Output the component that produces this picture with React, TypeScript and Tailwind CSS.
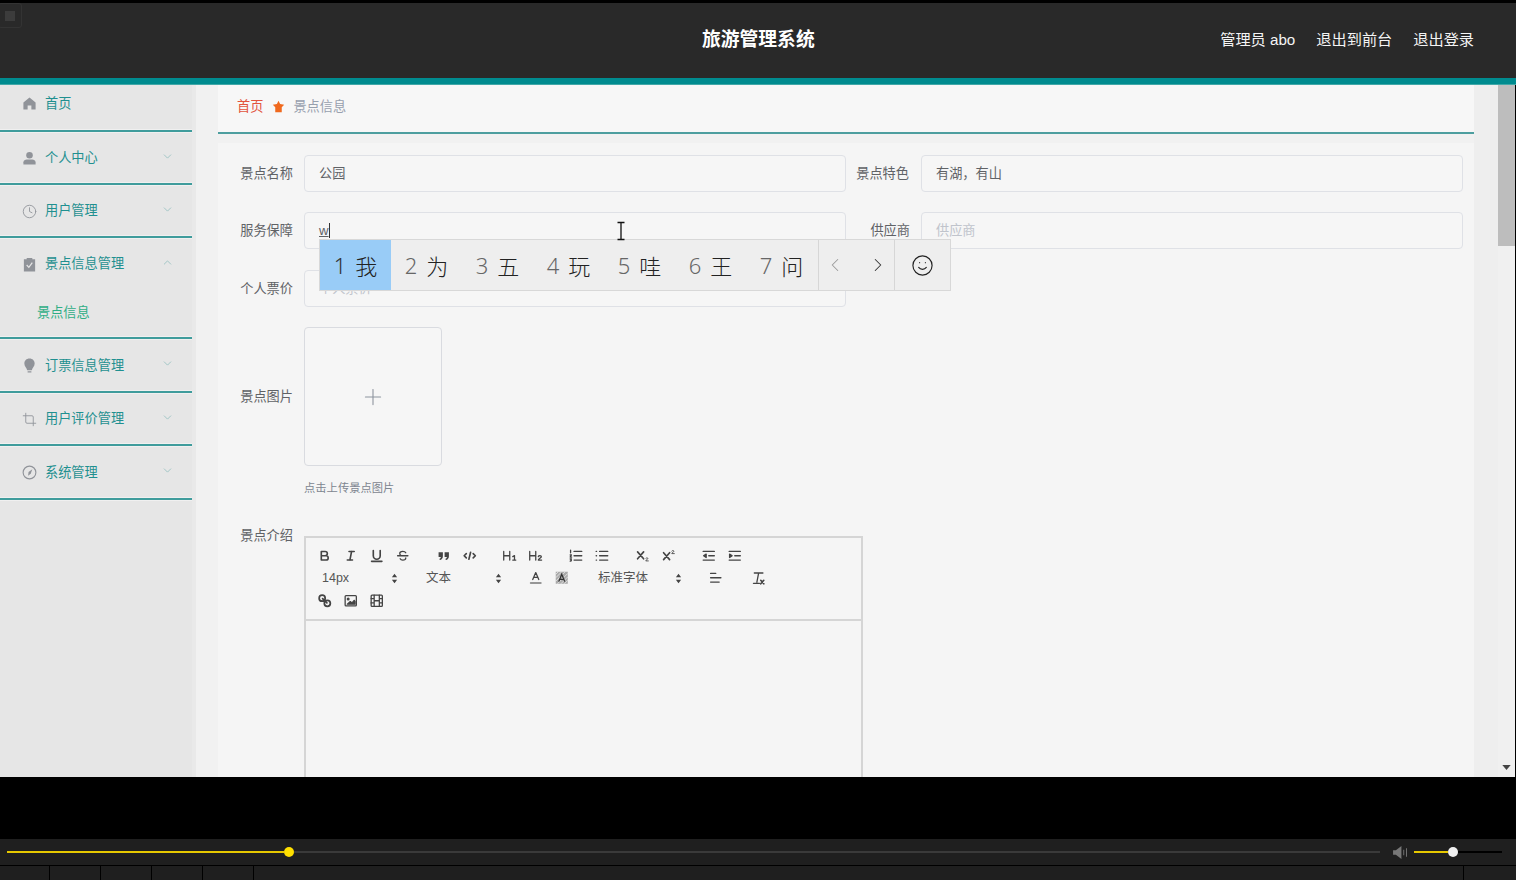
import React from "react";
import { ChevronDown, ChevronUp, ChevronLeft, ChevronRight, Clock, Crop, Plus, Smile } from "lucide-react";

const FONT = "font-['Liberation_Sans','Noto_Sans_CJK_SC',sans-serif]";

type P = { children: React.ReactNode };
const Q = ({ children }: P) => (
  <svg viewBox="0 0 18 18" className="w-[15.5px] h-[15.5px]" fill="none" stroke="#444" strokeWidth="1.9" strokeLinecap="round" strokeLinejoin="round">
    {children}
  </svg>
);
const Thin = ({ children }: P) => (
  <svg viewBox="0 0 18 18" className="w-[15.5px] h-[15.5px]" fill="none" stroke="#444" strokeWidth="1.5" strokeLinecap="round" strokeLinejoin="round">
    {children}
  </svg>
);

const icons: Record<string, React.ReactNode> = {
  bold: <Q><path d="M5 4h4.5a2.5 2.5 0 0 1 0 5H5zM5 9h5.5a2.5 2.5 0 0 1 0 5H5z" /></Q>,
  italic: <Q><path d="M7 4h6M5 14h6M10 4l-2 10" /></Q>,
  underline: <Q><path d="M5 3v6a4 4 0 0 0 8 0V3M3 15.5h12" /></Q>,
  strike: <Thin><path d="M3 9h12M12.5 5.5C12 4.5 10.5 4 9 4 7 4 5.5 5 5.5 6.5c0 .8.4 1.5 1.2 2M6 12.5C6.5 13.5 7.7 14 9 14c2 0 3.5-1 3.5-2.5" /></Thin>,
  quote: <Q><path fill="#444" stroke="none" d="M3 5h5v4.5C8 12 6.5 13.5 4.5 14l-.6-1.3c1-.4 1.6-1.1 1.7-2.2H3zM10 5h5v4.5c0 2.5-1.500 4-3.500 4.500l-.6-1.300c1-.4 1.600-1.100 1.700-2.200H10z" /></Q>,
  code: <Q><path d="M5 6.500 2.500 9 5 11.500M13 6.500 15.500 9 13 11.500M10 5l-2 8" /></Q>,
  h1: <Thin><path d="M2 4v10M9 4v10M2 9h7M12.500 10l2-1.200V14M12.500 14h3.500" /></Thin>,
  h2: <Thin><path d="M2 4v10M9 4v10M2 9h7M12 10c.3-1.500 3.500-1.500 3.500.2 0 1.300-3.500 2.300-3.500 3.800h3.800" /></Thin>,
  ol: <Thin><path d="M7 4h9M7 9h9M7 14h9M3 2.500v3M2.500 8h1.500L2.500 10.500H4.200M2.500 12.700H4l-.7 1.100c.9 0 .9 1.700-.8 1.400" /></Thin>,
  ul: <Thin><path d="M6.500 4H16M6.500 9H16M6.500 14H16M2.500 4h.5M2.500 9h.5M2.500 14h.5" /></Thin>,
  sub: <Q><path d="M3 4.500l7 8M10 4.500l-7 8" /><path strokeWidth="1" d="M12.500 12c.3-.8 2.500-.8 2.500.3 0 .9-2.500 1.400-2.500 2.700H15.500" /></Q>,
  sup: <Q><path d="M3 5.500l7 8M10 5.500l-7 8" /><path strokeWidth="1" d="M12.500 3.500c.3-.8 2.500-.8 2.500.3 0 .9-2.500 1.400-2.500 2.700H15.500" /></Q>,
  outdent: <Thin><path d="M2.500 4h13M9 9h6.500M2.500 14h13" /><path fill="#444" d="M6 7 3 9l3 2z" /></Thin>,
  indent: <Thin><path d="M2.500 4h13M9 9h6.500M2.500 14h13" /><path fill="#444" d="M3 7l3 2-3 2z" /></Thin>,
  color: <Q><path strokeWidth="1.500" d="M5.500 11 9 3l3.500 8M6.800 8.500h4.400" /><path strokeWidth="1.800" stroke="#777" d="M3 15h12" /></Q>,
  bg: (
    <svg viewBox="0 0 18 18" className="w-[15.5px] h-[15.5px]" fill="none">
      <rect x="2" y="2" width="14" height="14" fill="#aaa" />
      <path stroke="#eee" strokeWidth="0.9" d="M2 5l3-3M2 9l7-7M2 13l11-11M4 16L16 4M8 16l8-8M12 16l4-4" />
      <path stroke="#333" strokeWidth="1.500" d="M5.500 13.500 9 5l3.500 8.500M6.800 10.800h4.400" />
    </svg>
  ),
  align: <Thin><path d="M3 4h6M3 9h12M3 14h10" /></Thin>,
  clean: <Q><path strokeWidth="1.500" d="M5 3.500h10M10 3.500 8 14M4 15.500h7" /><path d="M12.500 12l3.500 4M16 12l-3.500 4" /></Q>,
  link: <Thin><circle cx="6" cy="6" r="3.500" strokeWidth="2" /><circle cx="12" cy="12" r="3.500" strokeWidth="2" /><path strokeWidth="2" d="M6.500 6.500l5 5" /></Thin>,
  image: <Thin><rect x="2.500" y="3" width="13" height="12" rx="1" /><circle cx="6" cy="7" r="1" fill="#444" /><path fill="#444" d="M5 13l3.500-3 2 1.500 2.500-3 1 1.500V13z" /></Thin>,
  video: <Thin><rect x="2.500" y="2.500" width="13" height="13" rx="1" /><path d="M6 2.500v13M12 2.500v13M2.500 6.500H6M2.500 11.500H6M12 6.500h3.500M12 11.500h3.500M6 9h6" /></Thin>,
};

const Btn = ({ name }: { name: string }) => (
  <span className="w-[26px] h-[22px] flex items-center justify-center">{icons[name]}</span>
);

const Arrows = () => (
  <svg viewBox="0 0 8 12" className="w-[7px] h-[11px]" fill="#444">
    <path d="M4 0.500 7 4.500H1zM4 11.500 1 7.500h6z" />
  </svg>
);

const Picker = ({ label, className }: { label: string; className: string }) => (
  <span className={`h-[22px] pl-[10px] pr-[6px] flex items-center justify-between text-[12.500px] text-[#555] ${className}`}>
    {label}
    <Arrows />
  </span>
);

const g = "#909399";
const sideIcons: Record<string, React.ReactNode> = {
  home: <svg viewBox="0 0 16 16" className="w-[15px] h-[15px]" fill={g}><path d="M8 1.500 1.500 7v7.500h4.500v-4.500h4v4.500h4.500V7z" /></svg>,
  user: <svg viewBox="0 0 16 16" className="w-[15px] h-[15px]" fill={g}><circle cx="8" cy="4.500" r="3.500" /><path d="M1.500 14.500V12c0-2 2-3 3.500-3h6c1.500 0 3.500 1 3.500 3v2.500z" /></svg>,
  clock: <Clock size={15} color={g} strokeWidth={1.400} />,
  clip: <svg viewBox="0 0 16 16" className="w-[15px] h-[15px]"><path fill={g} d="M2 2.500h3V1h6v1.500h3v13H2z" /><path fill="none" stroke="#e6e6e6" strokeWidth="1.300" d="M5 8.500 7.300 11 11 6" /></svg>,
  bulb: <svg viewBox="0 0 16 16" className="w-[15px] h-[15px]" fill={g}><path d="M8 .5c3.300 0 5.500 2.400 5.500 5.300 0 3-2.500 4.500-3 7.200h-5c-.5-2.700-3-4.200-3-7.200C2.500 2.900 4.700.5 8 .5zM6 14h4v1.500H6z" /></svg>,
  crop: <Crop size={15} color={g} strokeWidth={1.400} />,
  compass: <svg viewBox="0 0 16 16" className="w-[15px] h-[15px]"><circle cx="8" cy="8" r="6.800" fill="none" stroke={g} strokeWidth="1.200" /><path fill={g} d="M11 4.500 9.300 9.300 6.500 11.500 7 7.500z" /></svg>,
};

const Divider = () => (
  <div className="h-[4px] flex flex-col justify-center bg-[#f0f0f0] shrink-0 -mt-[1px]">
    <div className="h-[2px] bg-[#3f9c9c]" />
  </div>
);

const SideItem = ({ icon, label, chevron, className }: { icon: string; label: string; chevron?: "up" | "down"; className: string }) => (
  <div className={`flex items-center pl-[22px] pr-[18px] ${className}`}>
    <span className="w-[15px] flex justify-center">{sideIcons[icon]}</span>
    <span className="ml-[8px] text-[13.200px] text-[#1f9090] flex-1">{label}</span>
    {chevron === "down" && <ChevronDown size={13} color="#7fb5b5" strokeWidth={1.200} className="-mt-[4px]" />}
    {chevron === "up" && <ChevronUp size={13} color="#7fb5b5" strokeWidth={1.200} className="-mt-[4px]" />}
  </div>
);

const Label = ({ children, className }: { children: React.ReactNode; className: string }) => (
  <div className={`text-[13.200px] text-[#606266] text-right shrink-0 ${className}`}>{children}</div>
);

const Input = ({ value, placeholder, className }: { value?: string; placeholder?: string; className: string }) => (
  <div className={`h-[37px] border border-[#dfe1e6] rounded-[4px] bg-[#f6f6f6] pl-[14px] flex items-center text-[13.200px] ${value ? "text-[#606266]" : "text-[#c0c4cc]"} ${className}`}>
    {value || placeholder}
  </div>
);

const cands = ["我", "为", "五", "玩", "哇", "王", "问"];

export default function App() {
  return (
    <div className={`w-[1516px] h-[880px] bg-black flex flex-col overflow-hidden relative ${FONT}`}>
      <div className="h-[3px] bg-black shrink-0" />
      <header className="h-[75px] bg-[#292929] flex items-center justify-end shrink-0 relative text-[#f4f4f4] pr-[42px] pb-[1px]">
        <div className="absolute left-[-2px] top-[0px] w-[24px] h-[25px] border border-[#333] rounded-[3px] flex items-center justify-center">
          <div className="w-[10px] h-[10px] bg-[#3c3c3c]" />
        </div>
        <div className="absolute left-[702px] top-[25px] text-[18.800px] leading-[24px] font-bold text-white">旅游管理系统</div>
        <div className="flex gap-[21px] text-[15.200px]">
          <span>管理员 abo</span>
          <span>退出到前台</span>
          <span>退出登录</span>
        </div>
      </header>
      <div className="h-[7px] bg-[#008b8f] border-b border-[#40a8a8] shrink-0" />

      <div className="h-[692px] flex shrink-0 bg-[#f1f1f1] overflow-hidden">
        <aside className="w-[218px] shrink-0 flex">
          <nav className="w-[192px] bg-[#e6e6e6] flex flex-col">
            <SideItem icon="home" label="首页" className="h-[45px] pb-[8px]" />
            <Divider />
            <SideItem icon="user" label="个人中心" chevron="down" className="h-[50px]" />
            <Divider />
            <SideItem icon="clock" label="用户管理" chevron="down" className="h-[50px]" />
            <Divider />
            <SideItem icon="clip" label="景点信息管理" chevron="up" className="h-[50px]" />
            <div className="h-[48px] pl-[37px] flex items-center text-[13.200px] text-[#2fae85] pb-[1px]">景点信息</div>
            <Divider />
            <SideItem icon="bulb" label="订票信息管理" chevron="down" className="h-[51px]" />
            <Divider />
            <SideItem icon="crop" label="用户评价管理" chevron="down" className="h-[50px]" />
            <Divider />
            <SideItem icon="compass" label="系统管理" chevron="down" className="h-[51px]" />
            <Divider />
          </nav>
          <div className="w-[4px] bg-[#e9e9e9]" />
        </aside>

        <main className="w-[1256px] shrink-0 flex flex-col relative">
          <div className="h-[47px] bg-[#f7f7f7] flex items-center pl-[19px] pb-[4px] text-[13.200px] shrink-0">
            <span className="text-[#e2543d]">首页</span>
            <svg viewBox="0 0 16 16" className="w-[13px] h-[13px] ml-[9px] mr-[8px]" fill="#f0691e"><path d="M8 1l2 4 5 .7-3 3.300V15H4V9L1 5.700 6 5z" /></svg>
            <span className="text-[#97a0ae]">景点信息</span>
          </div>
          <div className="h-[2px] bg-[#4d9e9f] shrink-0" />
          <div className="h-[9px] shrink-0" />
          <div className="flex-1 bg-[#f5f5f5] pt-[12px] flex flex-col">
            <div className="flex items-center">
              <Label className="w-[75px]">景点名称</Label>
              <Input value="公园" className="w-[542px] ml-[11px]" />
              <Label className="w-[63px]">景点特色</Label>
              <Input value="有湖，有山" className="w-[542px] ml-[12px]" />
            </div>
            <div className="flex items-center mt-[20px]">
              <Label className="w-[75px]">服务保障</Label>
              <div className="w-[542px] ml-[11px] h-[37px] border border-[#dfe1e6] rounded-[4px] bg-[#f6f6f6] pl-[14px] flex items-center text-[13.200px] text-[#606266]">
                <span className="underline">w</span>
                <span className="w-[1px] h-[15px] bg-[#333]" />
              </div>
              <Label className="w-[64px]">供应商</Label>
              <Input placeholder="供应商" className="w-[542px] ml-[11px]" />
            </div>
            <div className="flex items-center mt-[21px]">
              <Label className="w-[75px]">个人票价</Label>
              <Input placeholder="个人票价" className="w-[542px] ml-[11px]" />
            </div>
            <div className="flex items-center mt-[20px]">
              <Label className="w-[75px]">景点图片</Label>
              <div className="w-[138px] h-[139px] ml-[11px] border border-[#d9dbe0] rounded-[4px] bg-[#f6f6f6] flex items-center justify-center">
                <Plus size={26} color="#8c939d" strokeWidth={1} />
              </div>
            </div>
            <div className="ml-[86px] mt-[14px] text-[11.300px] leading-[16px] text-[#7d8590]">点击上传景点图片</div>
            <div className="flex items-start mt-[40px]">
              <Label className="w-[75px] -mt-[10px]">景点介绍</Label>
              <div className="w-[559px] ml-[11px] border-2 border-b-0 border-[#d5d5d5] h-[260px]">
                <div className="h-[83px] border-b-2 border-[#d5d5d5] pt-[6px] pl-[6px]">
                  <div className="flex h-[23px] gap-[14.400px] items-center">
                    <div className="flex"><Btn name="bold" /><Btn name="italic" /><Btn name="underline" /><Btn name="strike" /></div>
                    <div className="flex"><Btn name="quote" /><Btn name="code" /></div>
                    <div className="flex"><Btn name="h1" /><Btn name="h2" /></div>
                    <div className="flex"><Btn name="ol" /><Btn name="ul" /></div>
                    <div className="flex"><Btn name="sub" /><Btn name="sup" /></div>
                    <div className="flex"><Btn name="outdent" /><Btn name="indent" /></div>
                  </div>
                  <div className="flex h-[22px] items-center">
                    <Picker label="14px" className="w-[92px]" />
                    <Picker label="文本" className="w-[92px] ml-[12px]" />
                    <span className="ml-[15px]"><Btn name="color" /></span>
                    <Btn name="bg" />
                    <Picker label="标准字体" className="w-[100px] ml-[13px]" />
                    <span className="ml-[15px]"><Btn name="align" /></span>
                    <span className="ml-[16px]"><Btn name="clean" /></span>
                  </div>
                  <div className="flex h-[23px] items-center">
                    <Btn name="link" /><Btn name="image" /><Btn name="video" />
                  </div>
                </div>
              </div>
            </div>
          </div>

          <div className="absolute left-[101px] top-[154px] w-[632px] h-[52px] bg-[#eeeeee] border border-[#d8d8d8] flex items-stretch">
            {cands.map((c, i) => (
              <div key={c} className={`w-[71px] flex items-center justify-center gap-[9px] ${i === 0 ? "bg-[#99ccf7]" : ""}`}>
                <span className={`text-[22px] font-['Noto_Sans',sans-serif] font-light ${i === 0 ? "text-[#333]" : "text-[#666]"}`}>{i + 1}</span>
                <span className="text-[22px] font-['Noto_Sans_CJK_SC',sans-serif] font-light text-[#222]">{c}</span>
              </div>
            ))}
            <div className="w-[1px] ml-[1px] bg-[#d6d6d6]" />
            <div className="w-[75px] flex items-center justify-between px-[5px]">
              <ChevronLeft size={22} color="#999" strokeWidth={1.100} />
              <ChevronRight size={22} color="#333" strokeWidth={1.100} />
            </div>
            <div className="w-[1px] bg-[#d6d6d6]" />
            <div className="flex-1 flex items-center justify-center">
              <Smile size={23} color="#222" strokeWidth={1.200} />
            </div>
          </div>
          <svg viewBox="0 0 10 20" className="absolute left-[398px] top-[136px] w-[10px] h-[20px]" fill="none" stroke="#111" strokeWidth="1.300">
            <path d="M1.500 1.500h7M5 1.500v17M1.500 18.500h7" />
          </svg>
        </main>

        <div className="w-[24px] bg-[#eeeeee] shrink-0" />
        <div className="w-[17px] bg-[#f0f0f0] shrink-0 flex flex-col justify-between">
          <div className="h-[161px] bg-[#bdbdbd]" />
          <div className="h-[17px] flex items-center justify-center pb-[3px]">
            <svg viewBox="0 0 10 6" className="w-[9px] h-[5px]" fill="#444"><path d="M0 0h10L5 6z" /></svg>
          </div>
        </div>
        <div className="w-[1px] bg-black shrink-0" />
      </div>

      <div className="h-[62px] bg-black shrink-0" />

      <div className="h-[26px] bg-[#1f1f1f] flex items-center pl-[7px] shrink-0">
        <div className="w-[277px] h-[2px] bg-[#e6c800]" />
        <div className="w-[10px] h-[10px] rounded-full bg-[#ffdf00]" />
        <div className="w-[1086px] h-[2px] bg-[#3a3a3a]" />
        <svg viewBox="0 0 16 14" className="w-[15px] h-[13px] ml-[13px]" fill="#777">
          <path d="M0 4.500h3L9 0v14L3 9.500H0zM11 4h1v6h-1zM14 2.500h1v9h-1z" />
        </svg>
        <div className="w-[34px] h-[2px] bg-[#e6c800] ml-[6px]" />
        <div className="w-[10px] h-[10px] rounded-full bg-[#f0f0f0]" />
        <div className="w-[44px] h-[2px] bg-black" />
      </div>
      <div className="h-[1px] bg-black shrink-0" />
      <div className="flex-1 bg-[#1f1f1f] flex">
        <div className="w-[50px] border-r border-black" />
        <div className="w-[51px] border-r border-black" />
        <div className="w-[51px] border-r border-black" />
        <div className="w-[51px] border-r border-black" />
        <div className="w-[51px] border-r border-black" />
        <div className="w-[1210px] border-r border-black" />
      </div>
    </div>
  );
}
